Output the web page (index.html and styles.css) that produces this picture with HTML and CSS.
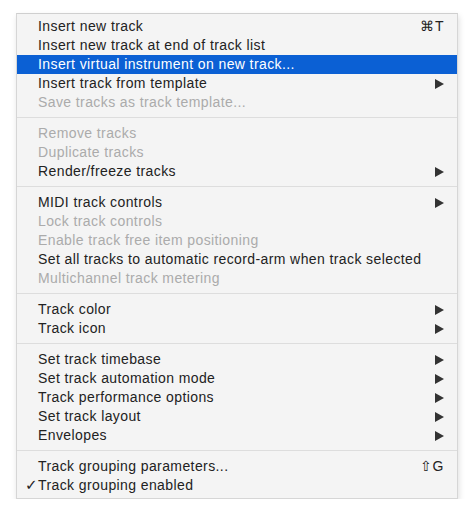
FILE: index.html
```html
<!DOCTYPE html>
<html>
<head>
<meta charset="utf-8">
<link rel="stylesheet" href="styles.css">
</head>
<body>
<div class="menu">
  <div class="item"><span class="check"></span><span class="label">Insert new track</span><span class="key">⌘T</span></div>
  <div class="item"><span class="check"></span><span class="label">Insert new track at end of track list</span></div>
  <div class="item selected"><span class="check"></span><span class="label">Insert virtual instrument on new track...</span></div>
  <div class="item"><span class="check"></span><span class="label">Insert track from template</span><span class="arrow"></span></div>
  <div class="item disabled"><span class="check"></span><span class="label">Save tracks as track template...</span></div>
  <div class="sep"></div>
  <div class="item disabled"><span class="check"></span><span class="label">Remove tracks</span></div>
  <div class="item disabled"><span class="check"></span><span class="label">Duplicate tracks</span></div>
  <div class="item"><span class="check"></span><span class="label">Render/freeze tracks</span><span class="arrow"></span></div>
  <div class="sep"></div>
  <div class="item"><span class="check"></span><span class="label">MIDI track controls</span><span class="arrow"></span></div>
  <div class="item disabled"><span class="check"></span><span class="label">Lock track controls</span></div>
  <div class="item disabled"><span class="check"></span><span class="label">Enable track free item positioning</span></div>
  <div class="item"><span class="check"></span><span class="label">Set all tracks to automatic record-arm when track selected</span></div>
  <div class="item disabled"><span class="check"></span><span class="label">Multichannel track metering</span></div>
  <div class="sep"></div>
  <div class="item"><span class="check"></span><span class="label">Track color</span><span class="arrow"></span></div>
  <div class="item"><span class="check"></span><span class="label">Track icon</span><span class="arrow"></span></div>
  <div class="sep"></div>
  <div class="item"><span class="check"></span><span class="label">Set track timebase</span><span class="arrow"></span></div>
  <div class="item"><span class="check"></span><span class="label">Set track automation mode</span><span class="arrow"></span></div>
  <div class="item"><span class="check"></span><span class="label">Track performance options</span><span class="arrow"></span></div>
  <div class="item"><span class="check"></span><span class="label">Set track layout</span><span class="arrow"></span></div>
  <div class="item"><span class="check"></span><span class="label">Envelopes</span><span class="arrow"></span></div>
  <div class="sep"></div>
  <div class="item"><span class="check"></span><span class="label">Track grouping parameters...</span><span class="key">⇧G</span></div>
  <div class="item"><span class="check">✓</span><span class="label">Track grouping enabled</span></div>
</div>
</body>
</html>
```

FILE: styles.css
```css
html, body {
  margin: 0;
  padding: 0;
  background: #ffffff;
}
body {
  padding: 13px 0 0 16px;
  font-family: "Liberation Sans", Arial, sans-serif;
  font-size: 14px;
  color: #222222;
}
.menu {
  width: 440px;
  box-sizing: content-box;
  background: #f4f4f4;
  border: 1px solid #d6d6d6;
  border-top-color: #cfcfcf;
  padding: 3px 0 3px 0;
  box-shadow: 1px 3px 6px rgba(0, 0, 0, 0.13);
  display: flex;
  flex-direction: column;
}
.item {
  height: 19px;
  display: flex;
  align-items: center;
  padding: 0 13px 0 8px;
  line-height: 19px;
  white-space: nowrap;
}
.check {
  width: 13px;
  font-family: "DejaVu Sans", sans-serif;
  font-size: 15px;
  color: #222;
}
.label {
  flex: 1;
  letter-spacing: 0.4px;
}
.key {
  color: #222;
  font-size: 14px;
  letter-spacing: 0.5px;
}
.arrow {
  width: 0;
  height: 0;
  border-top: 5px solid transparent;
  border-bottom: 5px solid transparent;
  border-left: 9px solid #333333;
  margin-right: 0;
}
.selected {
  background: #0b60d4;
  color: #ffffff;
}
.disabled {
  color: #ababab;
}
.sep {
  height: 1px;
  background: #dddddd;
  margin: 5px 0 6px 0;
}
```
